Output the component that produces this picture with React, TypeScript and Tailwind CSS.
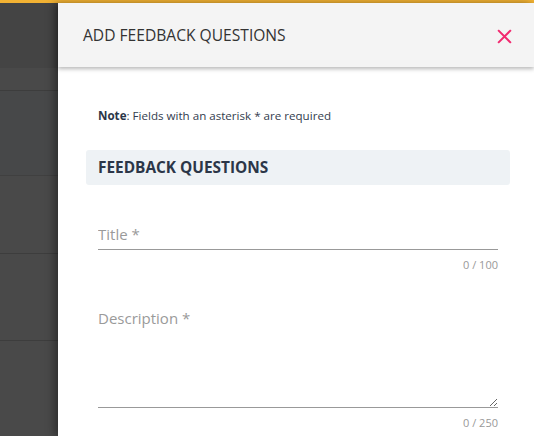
import React from "react";

const font = { fontFamily: '"Open Sans", "Noto Sans", sans-serif' };

const Backdrop = () => {
  return (
    <div className="w-[58px] shrink-0 bg-[#494949] flex flex-col">
      <div className="h-[65px] bg-[#444444]" />
      <div className="h-[22px]" />
      <div className="h-[85px] border-t border-[#3d3d3d] bg-[#474849]" />
      <div className="h-[78px] border-t border-[#404040]" />
      <div className="h-[87px] border-t border-[#3d3d3d]" />
      <div className="flex-1 border-t border-[#3d3d3d]" />
    </div>
  );
};

const App = () => {
  return (
    <div className="w-[534px] h-[436px] flex flex-col overflow-hidden bg-white" style={font}>
      <div className="h-[3px] bg-[#f2b233] shrink-0" />
      <div className="flex flex-1 min-h-0">
        <Backdrop />
        <div className="flex-1 flex flex-col bg-white shadow-[-4px_0_8px_rgba(0,0,0,0.35)] relative">
          <div className="h-[64px] shrink-0 bg-[#f4f4f4] flex items-center justify-between pl-[25px] pr-[20px] pt-[2px] shadow-[0_2px_4px_rgba(0,0,0,0.28)] relative z-10">
            <h1 className="text-[15.6px] text-[#333333]">ADD FEEDBACK QUESTIONS</h1>
            <button className="w-[20px] h-[20px] flex items-center justify-center">
              <svg width="17" height="17" viewBox="0 0 16 16" fill="none" stroke="#f2296f" strokeWidth="1.9">
                <path d="M2 2L14 14M14 2L2 14" />
              </svg>
            </button>
          </div>

          <div className="pl-[28px] pr-[24px] pt-[41px] flex flex-col">
            <p className="pl-[12px] text-[11.6px] leading-[16px] text-[#333d4e]">
              <span className="font-bold text-[#2b3648]">Note</span>: Fields with an asterisk * are required
            </p>

            <div className="mt-[26px] h-[35px] rounded-[3px] bg-[#eef2f5] flex items-center px-[12px]">
              <h2 className="text-[15.4px] font-bold text-[#2b3648]">FEEDBACK QUESTIONS</h2>
            </div>

            <div className="px-[12px] mt-[34px] flex flex-col">
              <input
                className="h-[31px] w-full border-b border-[#999999] text-[15px] text-[#333333] outline-none placeholder:text-[#9a9a9a]"
                placeholder="Title *"
              />
              <div className="mt-[7px] text-right text-[11px] leading-[16px] text-[#999999]">0 / 100</div>

              <textarea
                className="mt-[34px] h-[101px] w-full border-b border-[#999999] text-[15px] leading-[22px] text-[#333333] outline-none placeholder:text-[#9a9a9a] resize-y"
                placeholder="Description *"
              />
              <div className="mt-[7px] text-right text-[11px] leading-[16px] text-[#999999]">0 / 250</div>
            </div>
          </div>
        </div>
      </div>
    </div>
  );
};

export default App;
